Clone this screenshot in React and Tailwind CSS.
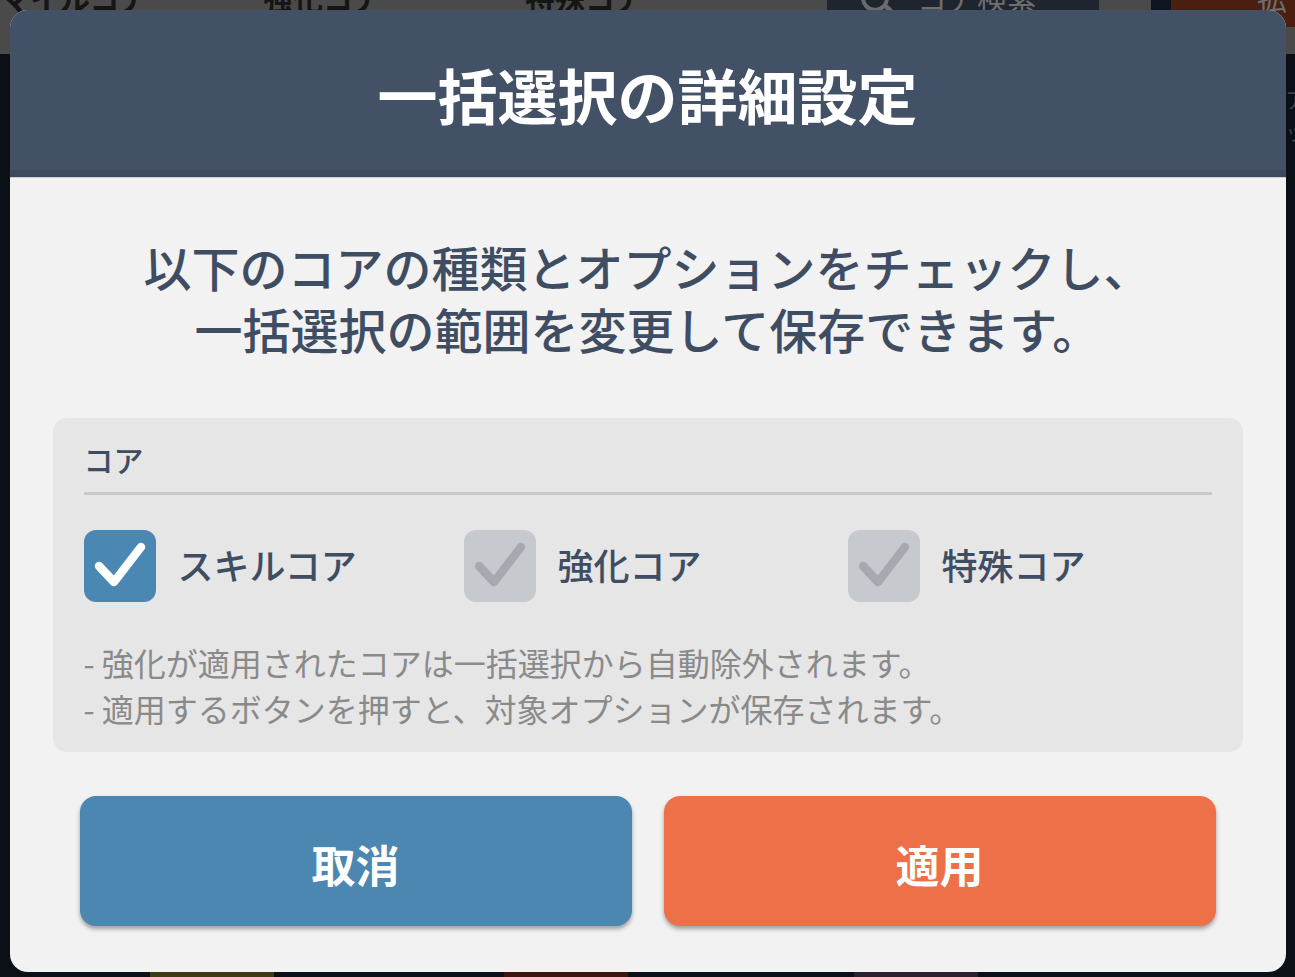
import React from "react";

const FONT = { fontFamily: '"Noto Sans CJK JP", "Noto Sans", sans-serif' };

function Check({ color }) {
  return (
    <svg width="72" height="72" viewBox="0 0 72 72" className="block">
      <path d="M15 36 L30 52 L57 17" fill="none" stroke={color} strokeWidth="8.5" strokeLinecap="round" strokeLinejoin="round" />
    </svg>
  );
}

function CheckItem({ checked, label, width }) {
  return (
    <div className={`flex items-center gap-[22px] ${width}`}>
      <div
        className={`w-[72px] h-[72px] rounded-[12px] ${checked ? "bg-[#4a87b3]" : "bg-[#c6c9cd]"}`}
      >
        <Check color={checked ? "#ffffff" : "#a6aab0"} />
      </div>
      <span className="text-[36px] leading-[48px] font-medium text-[#3f4d63] -mt-[4px]">{label}</span>
    </div>
  );
}

export default function App() {
  return (
    <div className="relative w-[1295px] h-[977px] overflow-hidden bg-[#0b0f16]" style={FONT}>
      {/* background page (dimmed) */}
      <div className="flex flex-col h-full">
        <div className="h-[54px] bg-[#4a4a4a] flex items-start">
          <div className="w-[160px] -mt-[18px] text-[30px] leading-none text-[#151515] font-bold">マイルコア</div>
          <div className="w-[103px]" />
          <div className="w-[262px] -mt-[18px] text-[30px] leading-none text-[#151515] font-bold">強化コア</div>
          <div className="w-[302px] -mt-[18px] text-[30px] leading-none text-[#151515] font-bold">特殊コア</div>
          <div className="w-[272px] h-[30px] bg-[#1e252e] flex items-start gap-[24px] pl-[34px]">
            <div className="relative w-[32px] h-[30px] -mt-[16px]">
              <div className="w-[28px] h-[28px] rounded-full border-[4px] border-[#6b6b6b]" />
              <div className="absolute left-[22px] top-[24px] w-[14px] h-[5px] rounded-full bg-[#6b6b6b] rotate-45" />
            </div>
            <span className="-mt-[18px] text-[30px] leading-none text-[#6e6e6e]">コア検索</span>
          </div>
          <div className="w-[52px]" />
          <div className="w-[20px] h-full bg-[#0e1520]" />
          <div className="flex-1 h-[27px] bg-[#4a1f10] flex items-start pl-[86px]">
            <span className="-mt-[18px] text-[30px] leading-none text-[#6e6e6e]">拡</span>
          </div>
        </div>
        <div className="flex-1 flex justify-end">
          <div className="w-[10px] flex flex-col pt-[28px] text-[22px] leading-[32px] text-[#3a3f47] overflow-hidden">
            <span>ア</span>
            <span>ッ</span>
          </div>
        </div>
        <div className="h-[5px] flex">
          <div className="w-[150px]" />
          <div className="w-[124px] bg-[#3d3a14]" />
          <div className="w-[230px]" />
          <div className="w-[124px] bg-[#3d1410]" />
          <div className="w-[226px]" />
          <div className="w-[124px] bg-[#2c1f2c]" />
        </div>
      </div>

      {/* modal */}
      <div className="absolute inset-0 flex justify-center pt-[10px]">
        <div className="w-[1276px] h-[962px] rounded-[18px] overflow-hidden bg-[#f2f2f2] flex flex-col">
          <div className="h-[167px] bg-[#435166] border-b-[7px] border-[#3d4a5d] flex items-center justify-center pt-[8px]">
            <h1 className="text-[60px] leading-none font-bold text-white">一括選択の詳細設定</h1>
          </div>
          <div className="h-px bg-[#c9ced6]" />
          <div className="flex flex-col items-center pt-[57px]">
            <p className="text-[48px] leading-[62px] font-medium text-[#3f4d63] text-center">
              以下のコアの種類とオプションをチェックし、
              <br />
              一括選択の範囲を変更して保存できます。
            </p>
          </div>
          <div className="mx-[43px] mt-[59px] h-[334px] rounded-[14px] bg-[#e6e6e6] px-[31px] pt-[21px]">
            <div className="text-[30px] leading-[40px] font-medium text-[#3f4d63]">コア</div>
            <div className="mt-[13px] h-[3px] bg-[#c9c9c9]" />
            <div className="mt-[35px] flex">
              <CheckItem checked label="スキルコア" width="w-[380px]" />
              <CheckItem label="強化コア" width="w-[384px]" />
              <CheckItem label="特殊コア" width="flex-1" />
            </div>
            <div className="mt-[37px] text-[32px] leading-[46px] text-[#8a8a8a]">
              <div>- 強化が適用されたコアは一括選択から自動除外されます。</div>
              <div>- 適用するボタンを押すと、対象オプションが保存されます。</div>
            </div>
          </div>
          <div className="mt-[44px] px-[70px] flex gap-[32px]">
            <button className="flex-1 h-[130px] rounded-[16px] bg-[#4b87b1] shadow-[0_3px_4px_rgba(0,0,0,0.35)] flex items-center justify-center pt-[5px]">
              <span className="text-[44px] leading-none font-bold text-white">取消</span>
            </button>
            <button className="flex-1 h-[130px] rounded-[16px] bg-[#ee7049] shadow-[0_3px_4px_rgba(0,0,0,0.35)] flex items-center justify-center pt-[5px]">
              <span className="text-[44px] leading-none font-bold text-white">適用</span>
            </button>
          </div>
        </div>
      </div>
    </div>
  );
}
